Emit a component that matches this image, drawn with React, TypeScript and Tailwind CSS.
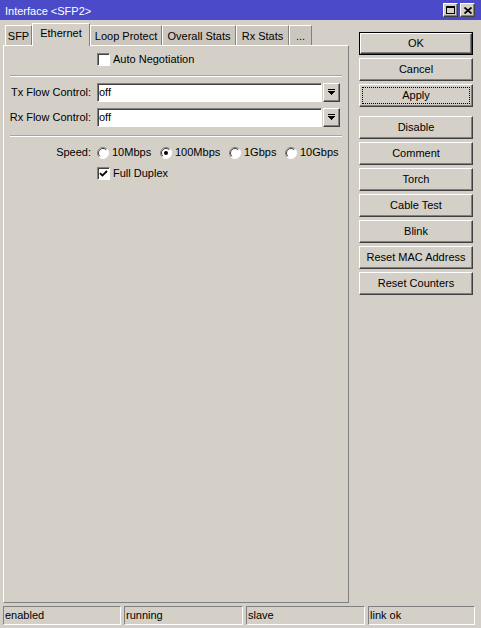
import React from "react";

const font = "font-['Liberation_Sans',Arial,sans-serif]";

// classic 3d bevels
const raised =
  "border border-t-white border-l-white border-r-[#404040] border-b-[#404040] shadow-[inset_-1px_-1px_0_#808080]";
const sunken =
  "border border-t-[#808080] border-l-[#808080] border-r-white border-b-white shadow-[inset_1px_1px_0_#404040]";

const tabs = [
  { label: "SFP", w: "w-[27px]" },
  { label: "Ethernet", w: "w-[58px]", active: true },
  { label: "Loop Protect", w: "w-[72px]" },
  { label: "Overall Stats", w: "w-[74px]" },
  { label: "Rx Stats", w: "w-[53px]" },
  { label: "...", w: "w-[23px]" },
];

const actions = [
  ["OK", "Cancel", "Apply"],
  ["Disable", "Comment", "Torch", "Cable Test", "Blink", "Reset MAC Address", "Reset Counters"],
];

function Checkbox({ checked }: { checked?: boolean }) {
  return (
    <div className={`w-[13px] h-[13px] bg-white ${sunken} flex items-center justify-center`}>
      {checked && (
        <svg width="9" height="9" viewBox="0 0 9 9">
          <path d="M1 4.2 L3.4 6.6 L8 2" stroke="black" strokeWidth="1.8" fill="none" />
        </svg>
      )}
    </div>
  );
}

function Radio({ checked }: { checked?: boolean }) {
  return (
    <svg width="12" height="12" viewBox="0 0 12 12">
      <circle cx="6" cy="6" r="5.5" fill="white" />
      <path d="M2.1 9.9 A5.5 5.5 0 0 1 9.9 2.1" stroke="#808080" fill="none" />
      <path d="M2.8 9.2 A4.5 4.5 0 0 1 9.2 2.8" stroke="#404040" fill="none" />
      <path d="M9.9 2.1 A5.5 5.5 0 0 1 2.1 9.9" stroke="#ffffff" fill="none" />
      {checked && <circle cx="6" cy="6" r="2" fill="black" />}
    </svg>
  );
}

function Separator() {
  return <div className="mx-[6px] border-t border-t-[#a9a59e] border-b border-b-white" />;
}

function ComboRow({ label, value, className }: { label: string; value: string; className: string }) {
  return (
    <div className={`flex items-center h-[19px] ${className}`}>
      <div className="w-[87px] text-right">{label}</div>
      <div className={`ml-[6px] w-[225px] h-[19px] bg-white ${sunken} flex items-center pl-[1px]`}>{value}</div>
      <div className={`ml-[1px] w-[17px] h-[19px] ${raised} flex items-center justify-center`}>
        <svg width="7" height="7" viewBox="0 0 7 7" shapeRendering="crispEdges">
          <rect x="0" y="0" width="7" height="1" fill="black" />
          <path d="M0 2 H7 L3.5 6 Z" fill="black" />
        </svg>
      </div>
    </div>
  );
}

function ActionButton({ label }: { label: string }) {
  if (label === "OK") {
    return (
      <div className="h-[23px] border border-black">
        <div className={`h-full ${raised} flex items-center justify-center`}>{label}</div>
      </div>
    );
  }
  const focus = label === "Apply" ? "outline-1 outline-dotted outline-black outline-offset-[-4px]" : "";
  return <div className={`h-[23px] ${raised} ${focus} flex items-center justify-center`}>{label}</div>;
}

export default function App() {
  const speeds = [
    { label: "10Mbps", w: "w-[63px]" },
    { label: "100Mbps", w: "w-[69px]", checked: true },
    { label: "1Gbps", w: "w-[56px]" },
    { label: "10Gbps", w: "" },
  ];
  const status = [
    { text: "enabled", w: "w-[118px]" },
    { text: "running", w: "w-[119px]" },
    { text: "slave", w: "w-[119px]" },
    { text: "link ok", w: "w-[107px]" },
  ];

  return (
    <div className={`w-[481px] h-[628px] bg-[#d4d0c8] text-black text-[11px] leading-none flex flex-col ${font}`}>
      {/* title bar */}
      <div className="h-[20px] bg-[#4b4bc9] flex items-center pl-[5px] pr-[6px]">
        <div className="text-white pt-[2px] flex-1">Interface &lt;SFP2&gt;</div>
        <div className="flex gap-[2px]">
          <div className={`w-[15px] h-[14px] bg-[#d4d0c8] ${raised} flex items-center justify-center`}>
            <svg width="9" height="8" viewBox="0 0 9 8" shapeRendering="crispEdges">
              <rect x="0.5" y="0.5" width="8" height="7" fill="none" stroke="black" />
              <rect x="0" y="0" width="9" height="2" fill="black" />
            </svg>
          </div>
          <div className={`w-[15px] h-[14px] bg-[#d4d0c8] ${raised} flex items-center justify-center`}>
            <svg width="8" height="7" viewBox="0 0 8 7">
              <path d="M0.5 0.5 L7.5 6.5 M7.5 0.5 L0.5 6.5" stroke="black" strokeWidth="1.8" />
            </svg>
          </div>
        </div>
      </div>

      <div className="flex flex-1 pt-[3px]">
        {/* tabbed panel */}
        <div className="ml-[3px] w-[346px] flex flex-col">
          <div className="h-[22px] flex items-end pl-[2px]">
            {tabs.map((t) =>
              t.active ? (
                <div
                  key={t.label}
                  className={`${t.w} h-[23px] mb-[-1px] relative z-10 bg-[#d4d0c8] border-t border-l border-t-white border-l-white border-r border-r-[#808080] flex items-center justify-center pb-[3px]`}
                >
                  {t.label}
                </div>
              ) : (
                <div
                  key={t.label}
                  className={`${t.w} h-[20px] bg-[#cbc7bf] border-t border-l border-t-white border-l-white border-r border-r-[#808080] flex items-center justify-center pt-[1px]`}
                >
                  {t.label}
                </div>
              )
            )}
          </div>
          <div className="flex-1 border border-t-white border-l-white border-r-[#808080] border-b-[#808080] pt-[7px]">
            <div className="flex items-center h-[13px]">
              <div className="ml-[93px]">
                <Checkbox />
              </div>
              <span className="ml-[3px]">Auto Negotiation</span>
            </div>
            <div className="mt-[9px]">
              <Separator />
            </div>
            <ComboRow label="Tx Flow Control:" value="off" className="mt-[6px]" />
            <ComboRow label="Rx Flow Control:" value="off" className="mt-[6px]" />
            <div className="mt-[8px]">
              <Separator />
            </div>
            <div className="mt-[9px] flex items-center h-[13px]">
              <div className="w-[87px] text-right">Speed:</div>
              <div className="ml-[6px] flex items-center">
                {speeds.map((s) => (
                  <div key={s.label} className={`${s.w} flex items-center gap-[3px]`}>
                    <Radio checked={s.checked} />
                    <span>{s.label}</span>
                  </div>
                ))}
              </div>
            </div>
            <div className="mt-[8px] flex items-center h-[13px]">
              <div className="ml-[93px]">
                <Checkbox checked />
              </div>
              <span className="ml-[3px]">Full Duplex</span>
            </div>
          </div>
        </div>

        {/* action buttons */}
        <div className="ml-[10px] w-[114px] pt-[9px] flex flex-col gap-[9px]">
          {actions.map((group, i) => (
            <div key={i} className="flex flex-col gap-[3px]">
              {group.map((a) => (
                <ActionButton key={a} label={a} />
              ))}
            </div>
          ))}
        </div>
      </div>

      {/* status bar */}
      <div className="mt-[3px] mb-[3px] h-[19px] flex gap-[3px] pl-[3px]">
        {status.map((s) => (
          <div key={s.text} className={`${s.w} h-full border border-t-[#808080] border-l-[#808080] border-r-white border-b-white flex items-center pl-[1px]`}>
            {s.text}
          </div>
        ))}
      </div>
    </div>
  );
}
